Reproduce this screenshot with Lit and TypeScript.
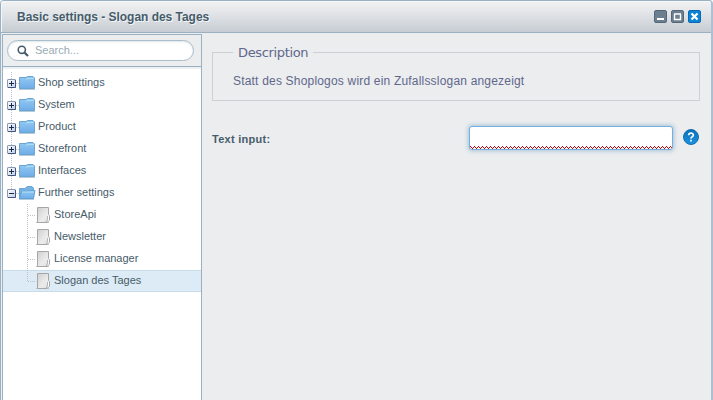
import { LitElement, html, css, svg } from 'lit';
import { customElement, property } from 'lit/decorators.js';

interface Entry {
  label: string;
  kind: 'folder' | 'open' | 'leaf';
  selected?: boolean;
  last?: boolean;
}

const ENTRIES: Entry[] = [
  { label: 'Shop settings', kind: 'folder' },
  { label: 'System', kind: 'folder' },
  { label: 'Product', kind: 'folder' },
  { label: 'Storefront', kind: 'folder' },
  { label: 'Interfaces', kind: 'folder' },
  { label: 'Further settings', kind: 'open', last: true },
  { label: 'StoreApi', kind: 'leaf' },
  { label: 'Newsletter', kind: 'leaf' },
  { label: 'License manager', kind: 'leaf' },
  { label: 'Slogan des Tages', kind: 'leaf', selected: true, last: true },
];

@customElement('tree-row')
class TreeRow extends LitElement {
  @property({ attribute: false }) entry!: Entry;

  static styles = css`
    :host { display: block; }
    .row {
      display: flex;
      height: 22px;
      box-sizing: border-box;
      font: 11px/20px "Liberation Sans", Arial, sans-serif;
      color: #475c6a;
    }
    .selected {
      background: linear-gradient(#c9dce9 0 1px, #dcebf5 1px 21px, #c9dce9 21px);
    }
    svg { display: block; flex: none; }
    .label { white-space: nowrap; }
  `;

  private branch() {
    const { kind, last } = this.entry;
    if (kind === 'leaf') {
      return svg`
        <path d="M24.5 0V${last ? 11 : 22}M25 11.5H32" stroke="#bcc2c8" stroke-dasharray="1 1" fill="none"/>
        <defs><linearGradient id="p" x2="1" y2="1"><stop stop-color="#cfcfcf"/><stop offset=".6" stop-color="#ececec"/><stop offset="1" stop-color="#dcdcdc"/></linearGradient></defs>
        <path d="M33 18.500H46" stroke="#c4c4c4"/>
        <path d="M34.500 3.500H45.500V10.500L46.500 12V16L44 18.500H34.500Z" fill="url(#p)" stroke="#a6a6a6"/>
        <path d="M44.500 11.500H46V16L44.500 17.500Z" fill="#fff"/>
        <path d="M44.500 12V15L43.500 18" fill="none" stroke="#b5b5b5"/>`;
    }
    return svg`
      <path d="M8.500 0V${last ? 8 : 22}M13 11.500H17" stroke="#bcc2c8" stroke-dasharray="1 1" fill="none"/>
      <defs>
        <linearGradient id="b" x2="1" y2="1"><stop stop-color="#fff"/><stop offset="1" stop-color="#c3cdde"/></linearGradient>
        <linearGradient id="f" x2="0" y2="1"><stop stop-color="#93c9f2"/><stop offset="1" stop-color="#6fade8"/></linearGradient>
      </defs>
      <rect x="4.500" y="7.500" width="8" height="8" rx=".5" fill="url(#b)" stroke="#8b98b5"/>
      <path d="M5 15.500H12.500V8" fill="none" stroke="#405681"/>
      <path d="M6 11.500H11${kind === 'folder' ? 'M8.500 9V14' : ''}" stroke="#172b4c" fill="none"/>
      ${kind === 'folder'
        ? svg`<path d="M16.500 5.500H23L24.500 4.500H30L31.500 6V16.500H16.500Z" fill="url(#f)" stroke="#6ba5d2"/>
            <path d="M24 6.500H31M23 7.500L25 6.500" stroke="#a9dcf5" fill="none"/>
            <path d="M16 17.500H32" stroke="#b5c9d9"/>`
        : svg`<path d="M16.500 6.500H22L24 4.500H29L30.500 6V16.500H16.500Z" fill="#75b3e2" stroke="#6ba5d2"/>
            <path d="M18.500 9.500L32 8.500L30.500 16.500H16.500Z" fill="url(#f)" stroke="#60a2d8"/>
            <path d="M19 10H31" stroke="#b5e2f8"/>
            <path d="M16 17.500H31" stroke="#b5c9d9"/>`}`;
  }

  render() {
    const { kind, label, selected } = this.entry;
    const width = kind === 'leaf' ? 51 : 35;
    return html`<div class="row ${selected ? 'selected' : ''}">
      <svg width=${width} height="22">${this.branch()}</svg>
      <span class="label">${label}</span>
    </div>`;
  }
}

@customElement('app-root')
class AppRoot extends LitElement {
  static styles = css`
    :host { display: block; height: 400px; overflow: hidden; font-family: "Liberation Sans", Arial, sans-serif; }
    * { box-sizing: border-box; }
    .window {
      height: 400px;
      display: flex;
      flex-direction: column;
      border: solid #9bb1c1;
      border-width: 1px 2px 0 1px;
      border-right-color: #abc0d5;
      border-radius: 4px 4px 0 0;
      background: #ebedef;
    }
    .header {
      flex: none;
      height: 32px;
      display: flex;
      align-items: center;
      padding: 0 10px 0 16px;
      border-bottom: 1px solid #9bb1c1;
      border-radius: 3px 3px 0 0;
      background: linear-gradient(#f1f2f3, #e4e6e9 35%, #c6cdd3);
      box-shadow: inset 1px 1px #f4f7f9;
    }
    .title {
      flex: 1;
      font: bold 12px/16px "Liberation Sans", Arial, sans-serif;
      letter-spacing: -0.03px;
      color: #475c6a;
      text-shadow: 1px 1px #f4f7fa;
    }
    .tools { display: flex; gap: 4px; }
    .tools svg { display: block; }
    .body { flex: 1; display: flex; min-height: 0; border-left: 1px solid #e8f0f5; }
    .side {
      width: 200px;
      flex: none;
      margin-top: 1px;
      border: 1px solid #9bb1c1;
      border-bottom: 0;
      background: #fff;
    }
    .searchbar {
      height: 32px;
      padding: 5px 0 0 4px;
      background: #ebedef;
      border-bottom: 1px solid #9bb1c1;
    }
    .search {
      width: 187px;
      height: 21px;
      display: flex;
      align-items: center;
      padding-left: 9px;
      gap: 6px;
      border: 1px solid #a9bdcb;
      border-radius: 11px;
      background: #fff;
      box-shadow: inset 0 1px 2px #dfe5e9;
      font-size: 11px;
      color: #9aabb5;
    }
    .hint { line-height: 12px; padding-bottom: 2px; }
    .tree { padding-top: 5px; box-shadow: inset 0 2px 1px #edf0f3; }
    .main { flex: 1; padding: 10px 11px 0 10px; }
    .description {
      margin: 0;
      height: 58px;
      padding: 0 0 0 20px;
      border: 1px solid #ced1d4;
      font-size: 12px;
      color: #61678b;
    }
    .legend {
      padding: 2px 5px 0;
      font: 13px/16px "DejaVu Sans", Verdana, sans-serif;
      letter-spacing: -0.35px;
    }
    .copy { line-height: 14px; margin-top: 13px; letter-spacing: 0.19px; }
    .field { display: flex; align-items: center; margin-top: 21px; height: 32px; }
    .name {
      width: 257px;
      padding-top: 2px;
      font: bold 11px/14px "Liberation Sans", Arial, sans-serif;
      letter-spacing: 0.28px;
      color: #475c6a;
    }
    .input {
      width: 204px;
      height: 24px;
      border: 1px solid #73afe0;
      border-radius: 3px;
      background: #fff;
      box-shadow: 0 0 4px 1px #a9c3d6;
      display: flex;
      align-items: flex-end;
      overflow: hidden;
    }
    .help { margin: -2px 0 0 10px; display: block; }
  `;

  private tool(kind: 'min' | 'max' | 'close') {
    const close = kind === 'close';
    return html`<svg width="13" height="13">
      <rect x=".5" y=".5" width="12" height="12" rx="1.5" fill=${close ? '#0b84d8' : '#6b7f8e'} stroke=${close ? '#0968b4' : '#526879'}/>
      ${kind === 'min'
        ? svg`<path d="M3 9H10" stroke="#fff" stroke-width="2"/>`
        : kind === 'max'
          ? svg`<path d="M3 4H10M3.500 4V9.500H9.500V4" stroke="#fff" stroke-width="1.400" fill="none"/>`
          : svg`<path d="M3.500 3.500L9.500 9.500M9.500 3.500L3.500 9.500" stroke="#fff" stroke-width="2.200"/>`}
    </svg>`;
  }

  render() {
    return html`<div class="window">
      <div class="header">
        <div class="title">Basic settings - Slogan des Tages</div>
        <div class="tools">${this.tool('min')}${this.tool('max')}${this.tool('close')}</div>
      </div>
      <div class="body">
        <div class="side">
          <div class="searchbar">
            <div class="search">
              <svg width="12" height="12"><circle cx="4.800" cy="4.800" r="3.600" fill="none" stroke="#475c6a" stroke-width="1.600"/><path d="M7.500 7.500L11 11" stroke="#475c6a" stroke-width="2.200"/></svg>
              <span class="hint">Search...</span>
            </div>
          </div>
          <div class="tree">${ENTRIES.map((e) => html`<tree-row .entry=${e}></tree-row>`)}</div>
        </div>
        <div class="main">
          <fieldset class="description">
            <legend class="legend">Description</legend>
            <div class="copy">Statt des Shoplogos wird ein Zufallsslogan angezeigt</div>
          </fieldset>
          <div class="field">
            <div class="name">Text input:</div>
            <div class="input">
              <svg width="202" height="3" shape-rendering="crispEdges">
                <defs><pattern id="z" width="4" height="3" patternUnits="userSpaceOnUse"><path d="M0 0h1v1h-1zM1 1h1v1h-1zM2 2h1v1h-1zM3 1h1v1h-1z" fill="#c00"/></pattern></defs>
                <rect width="202" height="3" fill="url(#z)"/>
              </svg>
            </div>
            <svg class="help" width="16" height="16">
              <defs><linearGradient id="h" x2="0" y2="1"><stop stop-color="#0a6fb8"/><stop offset="1" stop-color="#1c93e2"/></linearGradient></defs>
              <circle cx="8" cy="8" r="7.500" fill="url(#h)" stroke="#176fae"/>
              <path d="M5.700 6.300C5.700 3.500 10.300 3.500 10.300 6.200C10.300 7.800 8 7.700 8 9.500M8 10.700V12.400" fill="none" stroke="#fff" stroke-width="1.700"/>
            </svg>
          </div>
        </div>
      </div>
    </div>`;
  }
}
